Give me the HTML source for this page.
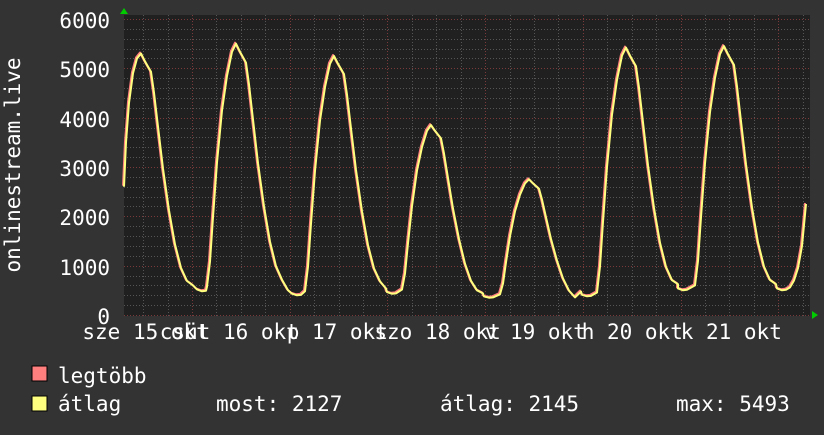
<!DOCTYPE html>
<html><head><meta charset="utf-8"><style>
body{margin:0;background:#333;width:824px;height:430px;overflow:hidden}
svg text{font-family:"DejaVu Sans Mono","Liberation Mono",monospace;font-size:21px;fill:#fff}
</style></head><body>
<svg id="s" width="824" height="430" xmlns="http://www.w3.org/2000/svg">
<rect width="824" height="430" fill="#333"/>
<rect x="124" y="15" width="686" height="301" fill="#202020"/>
<g id="grid"></g>
<polygon points="124,8 120,14 128,14" fill="#0c0"/>
<polygon points="818,315 812,311 812,319" fill="#0c0"/>
<g text-anchor="end">
<text x="110" y="28">6000</text><text x="110" y="77">5000</text><text x="110" y="127">4000</text>
<text x="110" y="176">3000</text><text x="110" y="225">2000</text><text x="110" y="275">1000</text>
<text x="110" y="324">0</text></g>
<text transform="translate(20,165) rotate(-90)" text-anchor="middle">onlinestream.live</text>
<g id="xl"></g>
<path id="c1" fill="none" stroke="#ff7f7f" stroke-width="2" stroke-linejoin="round" transform="translate(-1,-1)"/>
<path id="c2" fill="none" stroke="#ffff7f" stroke-width="2" stroke-linejoin="round"/>
<rect x="32" y="366" width="15" height="15" fill="#ff7f7f" stroke="#000"/>
<rect x="32" y="396" width="15" height="15" fill="#ffff7f" stroke="#000"/>
<text x="58" y="383">legtöbb</text>
<text x="58" y="411">átlag</text>
<text x="216" y="411">most: 2127</text>
<text x="440" y="411">átlag: 2145</text>
<text x="676" y="411">max: 5493</text>
</svg>
<script>
var NS="http://www.w3.org/2000/svg",g=document.getElementById('grid');
function L(x1,y1,x2,y2,c){var l=document.createElementNS(NS,'line');l.setAttribute('x1',x1);l.setAttribute('y1',y1);l.setAttribute('x2',x2);l.setAttribute('y2',y2);l.setAttribute('stroke',c);l.setAttribute('stroke-dasharray','1,2');g.appendChild(l);}
function Y(v){return 315-v*296/6000;}
for(var v=0;v<=6000;v+=200){var y=Math.round(Y(v))+0.5;L(124,y,810,y,v%1000==0?'#7a3a3a':'#555');}
for(var k=-3;k<30;k++){var x=Math.round(192+97.7*k/4)+0.5;if(x<124||x>810)continue;L(x,15,x,316,k%4==0?'#7a3a3a':'#555');}
var xl=document.getElementById('xl');
var labs=[["sze",133],["csüt",223],["p",312],["szo",425],["v",510],["h",607],["k",706]];
var d=15;labs.forEach(function(a){var t=document.createElementNS(NS,'text');t.setAttribute('x',a[1]-(a[0].length+1)*12.65);t.setAttribute('y',339);t.textContent=a[0]+" "+(d++)+" okt";xl.appendChild(t);});
var peaks=[[141,5300],[236,5500],[334,5250],[431,3850],[529,2750],[626,5420],[724,5450]];
var mins=[[205,480],[300,400],[395,430],[492,350],[590,380],[686,500],[785,500]];
var pts=[[124,2600],[126,3500],[129,4300],[133,4900],[137,5200]];
for(var i=0;i<7;i++){var p=peaks[i],m=mins[i],xp=p[0],V=p[1];
 if(i>0){var pm=mins[i-1];var a=pm[1];
  pts.push([xp-29,a*1.2],[xp-26,a+(V-a)*0.12],[xp-23,a+(V-a)*0.3],[xp-19,a+(V-a)*0.52],[xp-14,a+(V-a)*0.73],[xp-9,a+(V-a)*0.87],[xp-4,V*0.97]);}
 pts.push([xp,V],[xp+4,V*0.97],[xp+7,V*0.95],[xp+10,V*0.93],[xp+13,V*0.85],[xp+17,V*0.72],[xp+22,V*0.56],[xp+28,V*0.4],[xp+34,V*0.27],[xp+40,V*0.18],[xp+46,V*0.13],[xp+52,m[1]*1.25],[m[0]-8,m[1]*1.08],[m[0]-3,m[1]],[m[0]+1,m[1]*1.02]);}
pts.push([790,560],[794,700],[798,950],[802,1400],[806,2250]);
var s="M";pts.forEach(function(q,i){s+=(i?" L":"")+q[0]+","+Y(q[1]).toFixed(1);});
document.getElementById('c1').setAttribute('d',s);document.getElementById('c2').setAttribute('d',s);
</script>
</body></html>
